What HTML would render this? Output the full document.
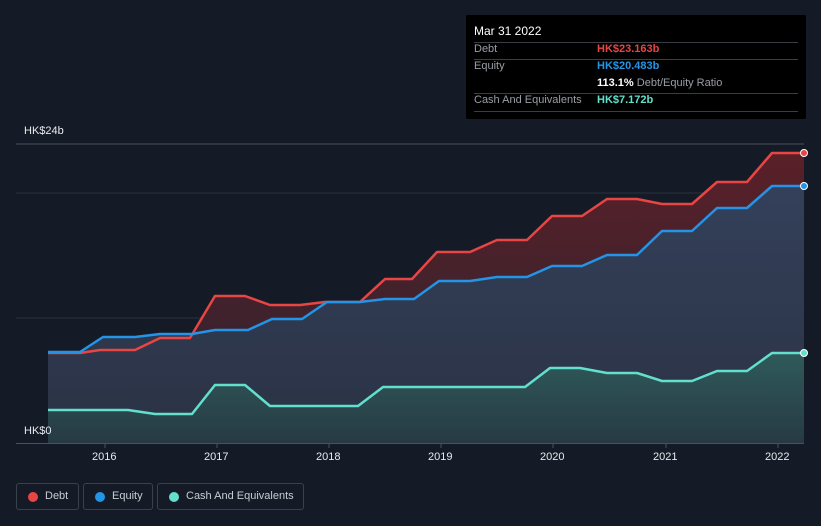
<html><head><style>
body{margin:0;background:#151b26;width:821px;height:526px;overflow:hidden;font-family:"Liberation Sans",sans-serif;position:relative}
.tt{position:absolute;left:466px;top:15px;width:340px;height:104px;background:#000;border-radius:2px}
.tt div{position:absolute;font-size:11px;white-space:nowrap}
.ln{position:absolute;left:8px;width:324px;height:1px;background:#3a3d44}
.lg{position:absolute;top:483px;height:27px;border:1px solid #3a404c;border-radius:3px;color:#c8ccd2;font-size:11px;line-height:25px;box-sizing:border-box;white-space:nowrap}
.lg i{position:absolute;left:11px;top:8px;width:10px;height:10px;border-radius:50%}
.ax{position:absolute;color:#e8eaee;font-size:11px}
</style></head><body>
<svg width="821" height="526" style="position:absolute;left:0;top:0">
<defs>
<linearGradient id="gd" x1="0" y1="0" x2="0" y2="1"><stop offset="0" stop-color="#5a2028"/><stop offset="1" stop-color="#2a2430"/></linearGradient>
<linearGradient id="ge" x1="0" y1="0" x2="0" y2="1"><stop offset="0" stop-color="#34405a"/><stop offset="1" stop-color="#2a3244"/></linearGradient>
<linearGradient id="gc" x1="0" y1="0" x2="0" y2="1"><stop offset="0" stop-color="#2f5a5a"/><stop offset="1" stop-color="#273a44"/></linearGradient>
</defs>
<line x1="16" y1="144" x2="804" y2="144" stroke="#4a505c"/>
<line x1="16" y1="193" x2="804" y2="193" stroke="#2a303c"/>
<line x1="16" y1="318" x2="804" y2="318" stroke="#2a303c"/>
<polygon fill="url(#gd)" points="48,443 48,353 80,353 100,350 135,350 160,338 190,338 215,296 245,296 270,305 300,305 325,302 360,302 385,279 412,279 437,252 470,252 497,240 527,240 552,216 582,216 607,199 637,199 662,204 692,204 717,182 747,182 772,153 804,153 804,443"/>
<polygon fill="url(#ge)" points="48,443 48,352 80,352 103,337 135,337 160,334 192,334 215,330 248,330 272,319 302,319 327,302 360,302 385,299 414,299 439,281 470,281 497,277 527,277 552,266 582,266 607,255 637,255 662,231 692,231 717,208 747,208 772,186 804,186 804,443"/>
<polygon fill="url(#gc)" points="48,443 48,410 128,410 155,414 192,414 215,385 245,385 270,406 358,406 383,387 525,387 550,368 580,368 607,373 637,373 662,381 692,381 717,371 747,371 772,353 804,353 804,443"/>
<g fill="none" stroke-width="2.5" stroke-linejoin="round">
<polyline stroke="#e84545" points="48,353 80,353 100,350 135,350 160,338 190,338 215,296 245,296 270,305 300,305 325,302 360,302 385,279 412,279 437,252 470,252 497,240 527,240 552,216 582,216 607,199 637,199 662,204 692,204 717,182 747,182 772,153 804,153"/>
<polyline stroke="#2394e6" points="48,352 80,352 103,337 135,337 160,334 192,334 215,330 248,330 272,319 302,319 327,302 360,302 385,299 414,299 439,281 470,281 497,277 527,277 552,266 582,266 607,255 637,255 662,231 692,231 717,208 747,208 772,186 804,186"/>
<polyline stroke="#62e0cc" points="48,410 128,410 155,414 192,414 215,385 245,385 270,406 358,406 383,387 525,387 550,368 580,368 607,373 637,373 662,381 692,381 717,371 747,371 772,353 804,353"/>
</g>
<circle cx="804" cy="153" r="3.5" fill="#e84545" stroke="#fff" stroke-width="1"/>
<circle cx="804" cy="186" r="3.5" fill="#2394e6" stroke="#fff" stroke-width="1"/>
<circle cx="804" cy="353" r="3.5" fill="#62e0cc" stroke="#fff" stroke-width="1"/>
<line x1="16" y1="443.5" x2="804" y2="443.5" stroke="#4a505c"/>
<g stroke="#4a505c"><line x1="105" y1="443" x2="105" y2="448"/><line x1="217" y1="443" x2="217" y2="448"/><line x1="329" y1="443" x2="329" y2="448"/><line x1="441" y1="443" x2="441" y2="448"/><line x1="553" y1="443" x2="553" y2="448"/><line x1="666" y1="443" x2="666" y2="448"/><line x1="778" y1="443" x2="778" y2="448"/></g>
</svg>
<div class="ax" style="left:24px;top:125px">HK$24b</div>
<div class="ax" style="left:24px;top:425px">HK$0</div>
<div class="ax" style="left:92px;top:451px">2016</div>
<div class="ax" style="left:204px;top:451px">2017</div>
<div class="ax" style="left:316px;top:451px">2018</div>
<div class="ax" style="left:428px;top:451px">2019</div>
<div class="ax" style="left:540px;top:451px">2020</div>
<div class="ax" style="left:653px;top:451px">2021</div>
<div class="ax" style="left:765px;top:451px">2022</div>
<div class="tt">
<div style="left:8px;top:9px;color:#fff;font-size:12px">Mar 31 2022</div>
<div class="ln" style="top:27px"></div>
<div style="left:8px;top:28px;color:#9a9ea6">Debt</div><div style="left:131px;top:28px;color:#e84545;font-weight:bold">HK$23.163b</div>
<div class="ln" style="top:44px"></div>
<div style="left:8px;top:45px;color:#9a9ea6">Equity</div><div style="left:131px;top:45px;color:#2394e6;font-weight:bold">HK$20.483b</div>
<div style="left:131px;top:62px;color:#9a9ea6"><b style="color:#fff">113.1%</b> Debt/Equity Ratio</div>
<div class="ln" style="top:78px"></div>
<div style="left:8px;top:79px;color:#9a9ea6">Cash And Equivalents</div><div style="left:131px;top:79px;color:#62e0cc;font-weight:bold">HK$7.172b</div>
<div class="ln" style="top:96px"></div>
</div>
<div class="lg" style="left:16px;width:63px"><i style="background:#e84545"></i><span style="position:absolute;left:28px">Debt</span></div>
<div class="lg" style="left:83px;width:70px"><i style="background:#2394e6"></i><span style="position:absolute;left:28px">Equity</span></div>
<div class="lg" style="left:157px;width:147px"><i style="background:#62e0cc"></i><span style="position:absolute;left:28px">Cash And Equivalents</span></div>
</body></html>
